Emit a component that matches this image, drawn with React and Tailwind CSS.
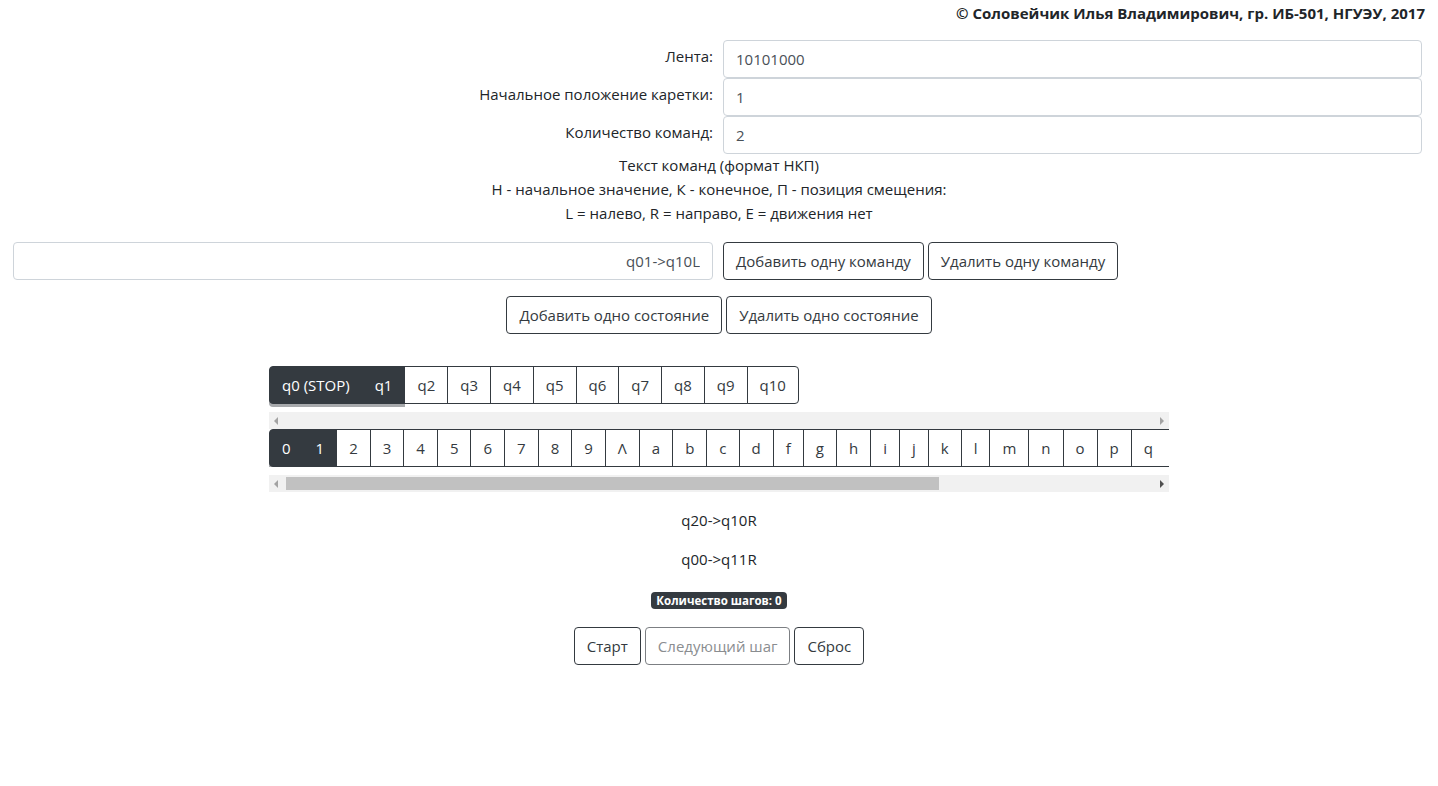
import React from "react";

const font = { fontFamily: '"Open Sans", "Noto Sans", sans-serif' };

const states = ["q0 (STOP)", "q1", "q2", "q3", "q4", "q5", "q6", "q7", "q8", "q9", "q10"];
const symbols = ["0", "1", "2", "3", "4", "5", "6", "7", "8", "9", "Λ", "a", "b", "c", "d", "f", "g", "h", "i", "j", "k", "l", "m", "n", "o", "p", "q"];
const active = ["q0 (STOP)", "q1", "0", "1"];

const FormRow = ({ label, value }) => (
  <div className="flex items-start">
    <label className="w-[713px] text-right pt-[4px]">{label}</label>
    <input
      readOnly
      value={value}
      className="ml-[10px] w-[699px] h-[38px] border border-[#ced4da] rounded-[4px] px-3 text-[#495057] outline-none"
    />
  </div>
);

const Btn = ({ children, disabled }) => (
  <button
    className={`h-[38px] px-3 border rounded-[4px] bg-white ${
      disabled ? "border-[#7c7f83] text-[#8a8d90]" : "border-[#343a40] text-[#343a40]"
    }`}
  >
    {children}
  </button>
);

// полоса прокрутки (нарисована вручную)
const Scrollbar = ({ thumb }) => (
  <div className="relative h-[17px] bg-[#f1f1f1] w-full">
    <span className="absolute left-[5px] top-[5px] w-0 h-0 border-y-[4px] border-y-transparent border-r-[4px] border-r-[#a3a3a3]" />
    {thumb && <div className="absolute left-[17px] top-[2px] h-[13px] w-[653px] bg-[#c1c1c1]" />}
    <span className={`absolute right-[5px] top-[5px] w-0 h-0 border-y-[4px] border-y-transparent border-l-[4px] ${thumb ? "border-l-[#505050]" : "border-l-[#a3a3a3]"}`} />
  </div>
);

const Group = ({ items, rounded }) => (
  <div className="flex">
    {items.map((it, i) => {
      const isActive = active.includes(it);
      const last = i === items.length - 1;
      return (
        <button
          key={it}
          className={`shrink-0 h-[38px] px-3 border whitespace-nowrap ${i > 0 ? "-ml-px" : ""} ${
            isActive
              ? "bg-[#343a40] border-[#343a40] text-white shadow-[0_3px_0_#a7a9ac]"
              : "bg-white border-[#343a40] text-[#343a40]"
          } ${i === 0 ? "rounded-l-[4px]" : ""} ${last && rounded ? "rounded-r-[4px]" : ""} ${
            last && !rounded ? "border-r-0 pr-[16px]" : ""
          }`}
        >
          {it}
        </button>
      );
    })}
  </div>
);

export default function App() {
  return (
    <div className="min-h-screen bg-white text-[#212529] text-[15px] leading-[24px]" style={font}>
      <div className="text-right font-bold pr-[13px] pt-[1px] h-[40px]">
        © Соловейчик Илья Владимирович, гр. ИБ-501, НГУЭУ, 2017
      </div>

      <div className="flex flex-col">
        <FormRow label="Лента:" value="10101000" />
        <FormRow label="Начальное положение каретки:" value="1" />
        <FormRow label="Количество команд:" value="2" />
      </div>

      <div className="text-center -mt-[1px] w-[1438px]">
        <p>Текст команд (формат НКП)</p>
        <p>Н - начальное значение, К - конечное, П - позиция смещения:</p>
        <p>L = налево, R = направо, E = движения нет</p>
      </div>

      <div className="flex gap-[4px] mt-[17px]">
        <input
          readOnly
          value="q01->q10L"
          className="ml-[13px] mr-[6px] w-[700px] h-[38px] border border-[#ced4da] rounded-[4px] px-3 text-right text-[#495057] outline-none"
        />
        <Btn>Добавить одну команду</Btn>
        <Btn>Удалить одну команду</Btn>
      </div>

      <div className="flex justify-center gap-[4px] mt-[16px]">
        <Btn>Добавить одно состояние</Btn>
        <Btn>Удалить одно состояние</Btn>
      </div>

      <div className="w-[900px] mx-auto mt-[32px]">
        <Group items={states} rounded />
        <div className="mt-[8px]">
          <Scrollbar />
        </div>
        <div className="overflow-hidden">
          <Group items={symbols} />
        </div>
        <div className="mt-[8px]">
          <Scrollbar thumb />
        </div>
      </div>

      <div className="text-center mt-[16px]">
        <p className="h-[39px]">q20-&gt;q10R</p>
        <p className="h-[24px]">q00-&gt;q11R</p>
        <div className="flex justify-center mt-[21px]">
          <span className="bg-[#343a40] text-white text-[11.5px] font-bold leading-[17px] px-[5px] rounded-[4px]">
            Количество шагов: 0
          </span>
        </div>
        <div className="flex justify-center gap-[4px] mt-[18px]">
          <Btn>Старт</Btn>
          <Btn disabled>Следующий шаг</Btn>
          <Btn>Сброс</Btn>
        </div>
      </div>
    </div>
  );
}
